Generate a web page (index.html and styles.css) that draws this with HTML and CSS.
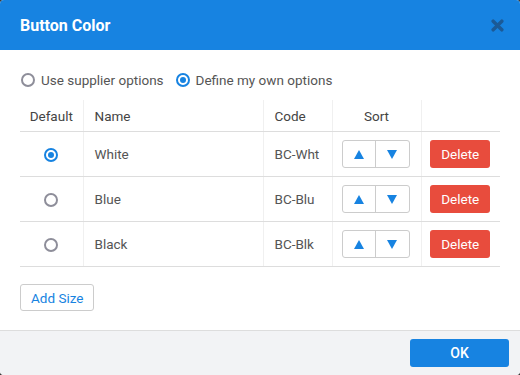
FILE: index.html
```html
<!DOCTYPE html>
<html>
<head>
<meta charset="utf-8">
<link rel="stylesheet" href="styles.css">
</head>
<body>
<div class="dialog">
  <div class="header">
    <div class="title">Button Color</div>
    <svg class="close" width="12" height="12" viewBox="0 0 12 12"><path d="M2 2 L10 10 M10 2 L2 10" stroke="#1b5a97" stroke-width="3.2" stroke-linecap="round"/></svg>
  </div>
  <div class="content">
    <div class="options">
      <label class="opt"><span class="radio"></span>Use supplier options</label>
      <label class="opt"><span class="radio on"></span>Define my own options</label>
    </div>
    <table class="grid">
      <colgroup>
        <col class="c1"><col class="c2"><col class="c3"><col class="c4"><col class="c5">
      </colgroup>
      <thead>
        <tr><th class="center">Default</th><th>Name</th><th>Code</th><th class="center">Sort</th><th></th></tr>
      </thead>
      <tbody>
        <tr>
          <td class="center"><span class="radio on"></span></td>
          <td>White</td><td>BC-Wht</td>
          <td class="center"><div class="sort"><span class="up"></span><span class="down"></span></div></td>
          <td class="center"><button class="del">Delete</button></td>
        </tr>
        <tr>
          <td class="center"><span class="radio"></span></td>
          <td>Blue</td><td>BC-Blu</td>
          <td class="center"><div class="sort"><span class="up"></span><span class="down"></span></div></td>
          <td class="center"><button class="del">Delete</button></td>
        </tr>
        <tr>
          <td class="center"><span class="radio"></span></td>
          <td>Black</td><td>BC-Blk</td>
          <td class="center"><div class="sort"><span class="up"></span><span class="down"></span></div></td>
          <td class="center"><button class="del">Delete</button></td>
        </tr>
      </tbody>
    </table>
    <button class="add">Add Size</button>
  </div>
  <div class="footer">
    <button class="ok">OK</button>
  </div>
</div>
</body>
</html>
```
FILE: styles.css
```css
html, body {
  margin: 0;
  padding: 0;
  background: #3a3a3a;
}
body {
  font-family: Roboto, "Liberation Sans", sans-serif;
  font-size: 13.5px;
  color: #555;
}
.dialog {
  width: 520px;
  height: 375px;
  background: #fff;
  border-radius: 4px;
  overflow: hidden;
  display: flex;
  flex-direction: column;
}
.header {
  height: 50px;
  flex: none;
  background: #1783e1;
  display: flex;
  align-items: center;
  justify-content: space-between;
  padding: 0 16px 0 20px;
}
.title {
  color: #fff;
  font-weight: bold;
  font-size: 16px;
  margin-top: 1px;
}
.close {
  display: block;
  width: 13px;
  height: 13px;
}
.content {
  flex: 1;
  padding: 18px 20px 0;
}
.options {
  height: 24px;
  display: flex;
  align-items: center;
  gap: 12px;
  margin-bottom: 8px;
  padding-left: 1px;
}
.opt {
  display: flex;
  align-items: center;
  gap: 6px;
  color: #555;
}
.radio {
  display: inline-block;
  box-sizing: border-box;
  width: 14px;
  height: 14px;
  border-radius: 50%;
  border: 2px solid #8e8e9a;
  position: relative;
  vertical-align: middle;
}
.radio.on {
  border-color: #1783e1;
}
.radio.on::after {
  content: "";
  position: absolute;
  left: 2px;
  top: 2px;
  width: 6px;
  height: 6px;
  border-radius: 50%;
  background: #1783e1;
}
.grid {
  width: 480px;
  border-collapse: collapse;
  table-layout: fixed;
}
.c1 { width: 63px; }
.c2 { width: 180px; }
.c3 { width: 69px; }
.c4 { width: 89px; }
.c5 { width: 79px; }
.grid th {
  font-weight: normal;
  color: #444;
  text-align: left;
  height: 31px;
  padding: 0 11px;
  border-bottom: 1px solid #ddd;
  border-left: 1px solid #f0f0f0;
}
.grid td {
  height: 44px;
  padding: 0 11px;
  border-bottom: 1px solid #ddd;
  border-left: 1px solid #f0f0f0;
}
.grid th:first-child, .grid td:first-child {
  border-left: none;
}
.grid .center {
  text-align: center;
  padding: 0;
}
.grid td.sortcell {
  padding: 0;
}
.sort {
  display: inline-flex;
  box-sizing: border-box;
  width: 68px;
  height: 28px;
  border: 1px solid #ccc;
  border-radius: 3px;
  vertical-align: middle;
  margin-right: 2px;
}
.sort span {
  flex: 1;
  display: flex;
  align-items: center;
  justify-content: center;
}
.sort .up {
  border-right: 1px solid #ccc;
}
.sort .up::before {
  content: "";
  border-left: 5px solid transparent;
  border-right: 5px solid transparent;
  border-bottom: 9px solid #1783e1;
}
.sort .down::before {
  content: "";
  border-left: 5px solid transparent;
  border-right: 5px solid transparent;
  border-top: 9px solid #1783e1;
}
.del {
  width: 60px;
  height: 28px;
  border: none;
  border-radius: 3px;
  background: #e84c3d;
  color: #fff;
  font-family: inherit;
  font-size: 13.5px;
  vertical-align: middle;
  padding: 0;
  margin-right: 1px;
}
.add {
  margin-top: 17px;
  height: 27px;
  padding: 0 10px;
  background: #fff;
  border: 1px solid #ccc;
  border-radius: 3px;
  color: #1783e1;
  font-family: inherit;
  font-size: 13.5px;
}
.footer {
  flex: none;
  background: #f2f3f5;
  border-top: 1px solid #ddd;
  display: flex;
  align-items: flex-start;
  justify-content: flex-end;
  padding: 8px 11px 0;
  box-sizing: border-box;
  height: 45px;
}
.ok {
  width: 99px;
  height: 28px;
  border: none;
  border-radius: 3px;
  background: #1783e1;
  color: #fff;
  font-family: inherit;
  font-weight: 500;
  font-size: 14px;
}
```
